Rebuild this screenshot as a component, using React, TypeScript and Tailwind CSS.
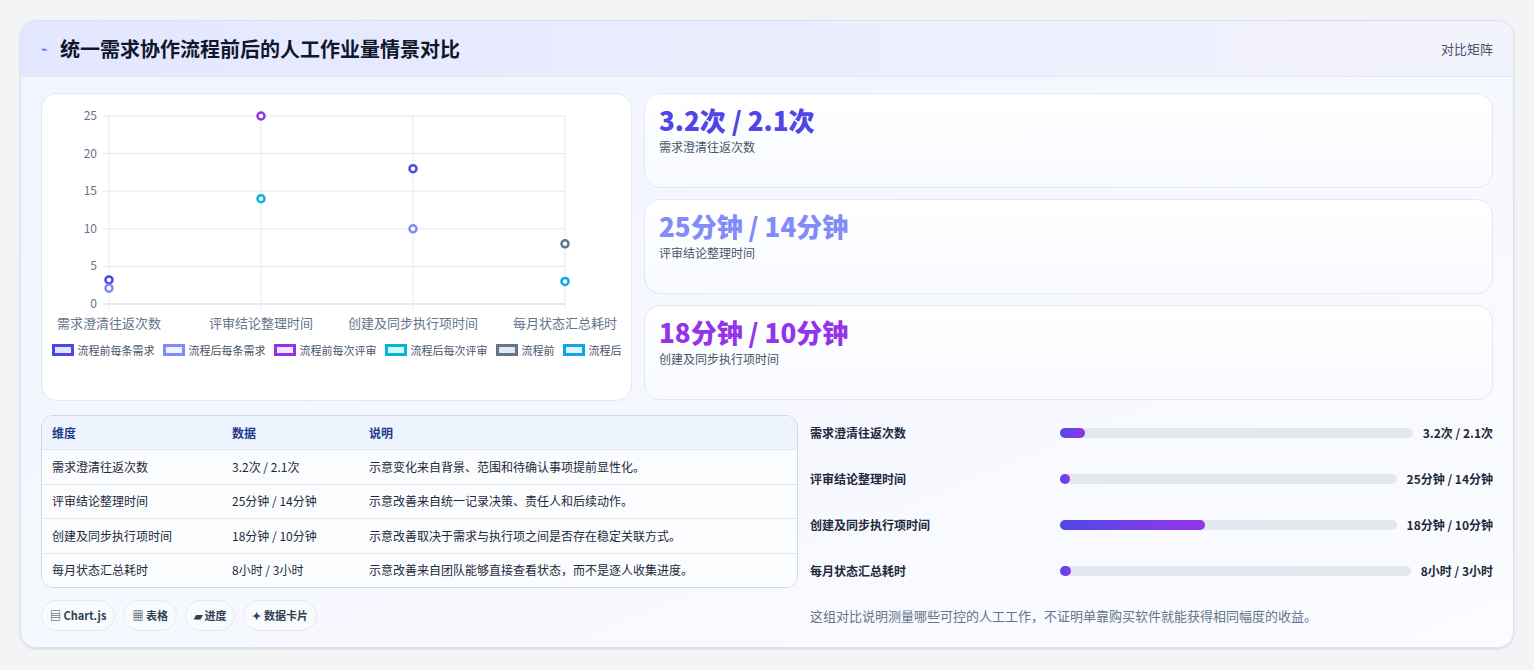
import React from 'react'

const font = { fontFamily: '"Noto Sans CJK SC", "Noto Sans", sans-serif' }

const stats = [
  { value: '3.2次 / 2.1次', label: '需求澄清往返次数', color: 'text-[#4f46e5]' },
  { value: '25分钟 / 14分钟', label: '评审结论整理时间', color: 'text-[#818cf8]' },
  { value: '18分钟 / 10分钟', label: '创建及同步执行项时间', color: 'text-[#9333ea]' },
]

const rows = [
  ['需求澄清往返次数', '3.2次 / 2.1次', '示意变化来自背景、范围和待确认事项提前显性化。'],
  ['评审结论整理时间', '25分钟 / 14分钟', '示意改善来自统一记录决策、责任人和后续动作。'],
  ['创建及同步执行项时间', '18分钟 / 10分钟', '示意改善取决于需求与执行项之间是否存在稳定关联方式。'],
  ['每月状态汇总耗时', '8小时 / 3小时', '示意改善来自团队能够直接查看状态，而不是逐人收集进度。'],
]

const bars = [
  { label: '需求澄清往返次数', value: '3.2次 / 2.1次', pct: 7 },
  { label: '评审结论整理时间', value: '25分钟 / 14分钟', pct: 3 },
  { label: '创建及同步执行项时间', value: '18分钟 / 10分钟', pct: 43 },
  { label: '每月状态汇总耗时', value: '8小时 / 3小时', pct: 3 },
]

const legend = [
  { name: '流程前每条需求', c: '#4f46e5', f: '#e0e7ff' },
  { name: '流程后每条需求', c: '#818cf8', f: '#eef2ff' },
  { name: '流程前每次评审', c: '#9333ea', f: '#f3e8ff' },
  { name: '流程后每次评审', c: '#06b6d4', f: '#cffafe' },
  { name: '流程前', c: '#64748b', f: '#e2e8f0' },
  { name: '流程后', c: '#0ea5e9', f: '#e0f2fe' },
]

function Chart() {
  const x0 = 67, x1 = 523, yTop = 18, yBot = 206
  const xs = [0, 1, 2, 3].map((i) => x0 + ((x1 - x0) / 3) * i)
  const y = (v: number) => yBot - (v / 25) * (yBot - yTop)
  const cats = ['需求澄清往返次数', '评审结论整理时间', '创建及同步执行项时间', '每月状态汇总耗时']
  const pts: [number, number, string][] = [
    [0, 3.2, '#4f46e5'], [0, 2.1, '#818cf8'], [1, 25, '#9333ea'], [1, 14, '#06b6d4'],
    [2, 18, '#4f46e5'], [2, 10, '#818cf8'], [3, 8, '#64748b'], [3, 3, '#0ea5e9'],
  ]
  return (
    <svg width="590" height="236" className="block">
      {[0, 5, 10, 15, 20, 25].map((v) => (
        <g key={v}>
          <line x1={x0 - 6} x2={x1} y1={y(v)} y2={y(v)} stroke={v === 0 ? '#cbd5e1' : '#e2e8f0'} />
          <text x={x0 - 12} y={y(v) + 4} textAnchor="end" fontSize="12" fill="#64748b">{v}</text>
        </g>
      ))}
      {xs.map((x, i) => (
        <g key={i}>
          <line x1={x} x2={x} y1={yTop} y2={yBot + 5} stroke="#e2e8f0" />
          <text x={x} y={230} textAnchor="middle" fontSize="13" fill="#64748b">{cats[i]}</text>
        </g>
      ))}
      {pts.map(([i, v, c], k) => (
        <circle key={k} cx={xs[i]} cy={y(v)} r="3.5" fill="#fff" stroke={c} strokeWidth="2.5" />
      ))}
    </svg>
  )
}

export default function App() {
  return (
    <div className="min-h-[670px] bg-[#f3f4f6] p-5" style={font}>
      <div className="overflow-hidden rounded-2xl border border-[#dbe1f5] bg-gradient-to-br from-[#f1f3ff] to-[#fbfcff] shadow-sm">
        <div className="flex h-14 items-center justify-between border-b border-[#e2e8f0] bg-gradient-to-r from-[#e3e7ff] to-[#f3f3fd] px-5">
          <div className="flex items-center gap-3">
            <span className="text-[11px] text-[#4f46e5]">⌁</span>
            <h1 className="text-[20px] font-bold text-[#0f172a]">统一需求协作流程前后的人工作业量情景对比</h1>
          </div>
          <span className="text-[13px] text-[#475569]">对比矩阵</span>
        </div>
        <div className="px-5 pb-4 pt-4">
          <div className="flex gap-3">
            <div className="h-[308px] w-[591px] shrink-0 rounded-2xl border border-[#e2e8f0] bg-white pt-1">
              <Chart />
              <div className="mx-auto mt-2 flex w-[570px] flex-wrap justify-center gap-x-2 gap-y-1 text-[11px] text-[#475569]">
                {legend.map((l) => (
                  <div key={l.name} className="flex items-center gap-1">
                    <span className="h-3 w-[22px] border-[3px]" style={{ borderColor: l.c, background: l.f }} />
                    {l.name}
                  </div>
                ))}
              </div>
            </div>
            <div className="flex flex-1 flex-col gap-[11px]">
              {stats.map((s) => (
                <div key={s.label} className="h-[95px] rounded-2xl border border-[#e2e8f0] bg-gradient-to-b from-white to-[#f8faff] px-3.5 pt-2">
                  <div className={`text-[26px] font-extrabold leading-9 ${s.color}`}>{s.value}</div>
                  <div className="text-[12px] text-[#475569]">{s.label}</div>
                </div>
              ))}
            </div>
          </div>
          <div className="mt-[14px] flex gap-3">
            <div className="w-[757px] shrink-0">
              <div className="overflow-hidden rounded-xl border border-[#cfd8e6] bg-white text-[12px] text-[#1e293b]">
                <div className="flex h-[33px] items-center bg-[#eef4fe] font-bold text-[#1e3a8a]">
                  <div className="w-[190px] pl-2.5">维度</div>
                  <div className="w-[137px]">数据</div>
                  <div>说明</div>
                </div>
                {rows.map((r) => (
                  <div key={r[0]} className="flex h-[34.5px] items-center border-t border-[#e2e8f0] bg-[#fbfcfe]">
                    <div className="w-[190px] pl-2.5">{r[0]}</div>
                    <div className="w-[137px]">{r[1]}</div>
                    <div>{r[2]}</div>
                  </div>
                ))}
              </div>
              <div className="mt-3 flex gap-2 text-[11px] font-semibold text-[#334155]">
                {['▤ Chart.js', '▦ 表格', '▰ 进度', '✦ 数据卡片'].map((c) => (
                  <span key={c} className="rounded-full border border-[#e2e8f0] bg-[#f8fafc] px-2 py-1.5">{c}</span>
                ))}
              </div>
            </div>
            <div className="-mt-[5px] flex flex-1 flex-col">
              {bars.map((b) => (
                <div key={b.label} className="flex h-[46px] items-center text-[12px] font-semibold text-[#1e293b]">
                  <div className="w-[250px] shrink-0">{b.label}</div>
                  <div className="h-2.5 flex-1 rounded-full bg-[#e2e8f0]">
                    <div className="h-2.5 rounded-full bg-gradient-to-r from-[#4f46e5] to-[#9333ea]" style={{ width: `${b.pct}%`, minWidth: 10 }} />
                  </div>
                  <div className="pl-2.5 font-bold">{b.value}</div>
                </div>
              ))}
              <p className="mt-3 text-[13px] text-[#64748b]">这组对比说明测量哪些可控的人工工作，不证明单靠购买软件就能获得相同幅度的收益。</p>
            </div>
          </div>
        </div>
      </div>
    </div>
  )
}
